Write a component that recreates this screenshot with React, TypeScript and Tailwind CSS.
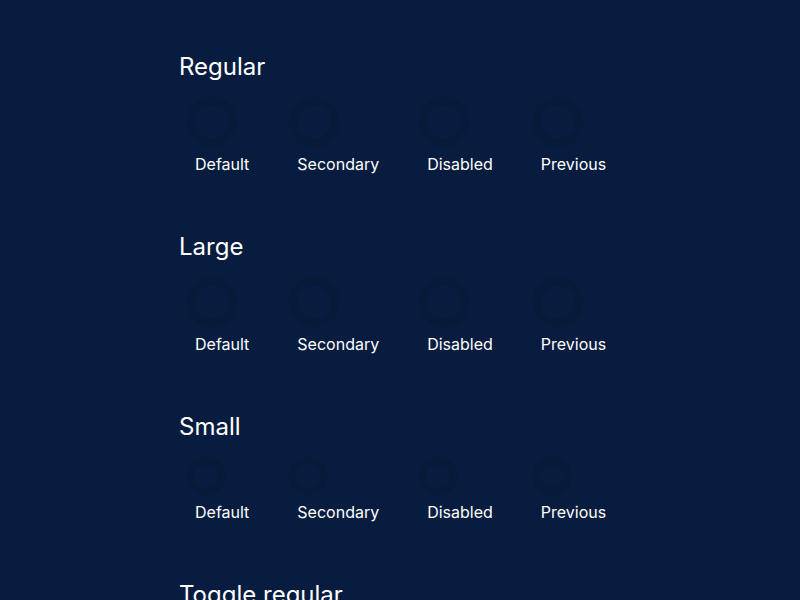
const sizes = [
  { title: "Regular", circle: "h-[50px] w-[50px] border-[8px]" },
  { title: "Large", circle: "h-[50px] w-[50px] border-[8px]" },
  { title: "Small", circle: "h-[38px] w-[38px] border-[7px]" },
];

const variants = ["Default", "Secondary", "Disabled", "Previous"];

function Spinner({ className }: { className: string }) {
  return <div className={`rounded-full border-[#061a3a] ${className}`} />;
}

export default function App() {
  return (
    <div
      className="h-screen overflow-hidden bg-[#071c3e] pl-[179px] pt-[51px] text-white"
      style={{ fontFamily: "Inter, 'Noto Sans', sans-serif" }}
    >
      {sizes.map((s) => (
        <section key={s.title} className="mb-[55px]">
          <h2 className="text-[24px] leading-8 font-normal">{s.title}</h2>
          <div className="mt-[14px] ml-2 flex gap-[40px]">
            {variants.map((v) => (
              <div key={v} className="flex flex-col items-start">
                <Spinner className={s.circle} />
                <span className="mt-[5px] ml-2 text-[16px] leading-6">{v}</span>
              </div>
            ))}
          </div>
        </section>
      ))}
      <h2 className="text-[24px] leading-8 font-normal">Toggle regular</h2>
    </div>
  );
}
